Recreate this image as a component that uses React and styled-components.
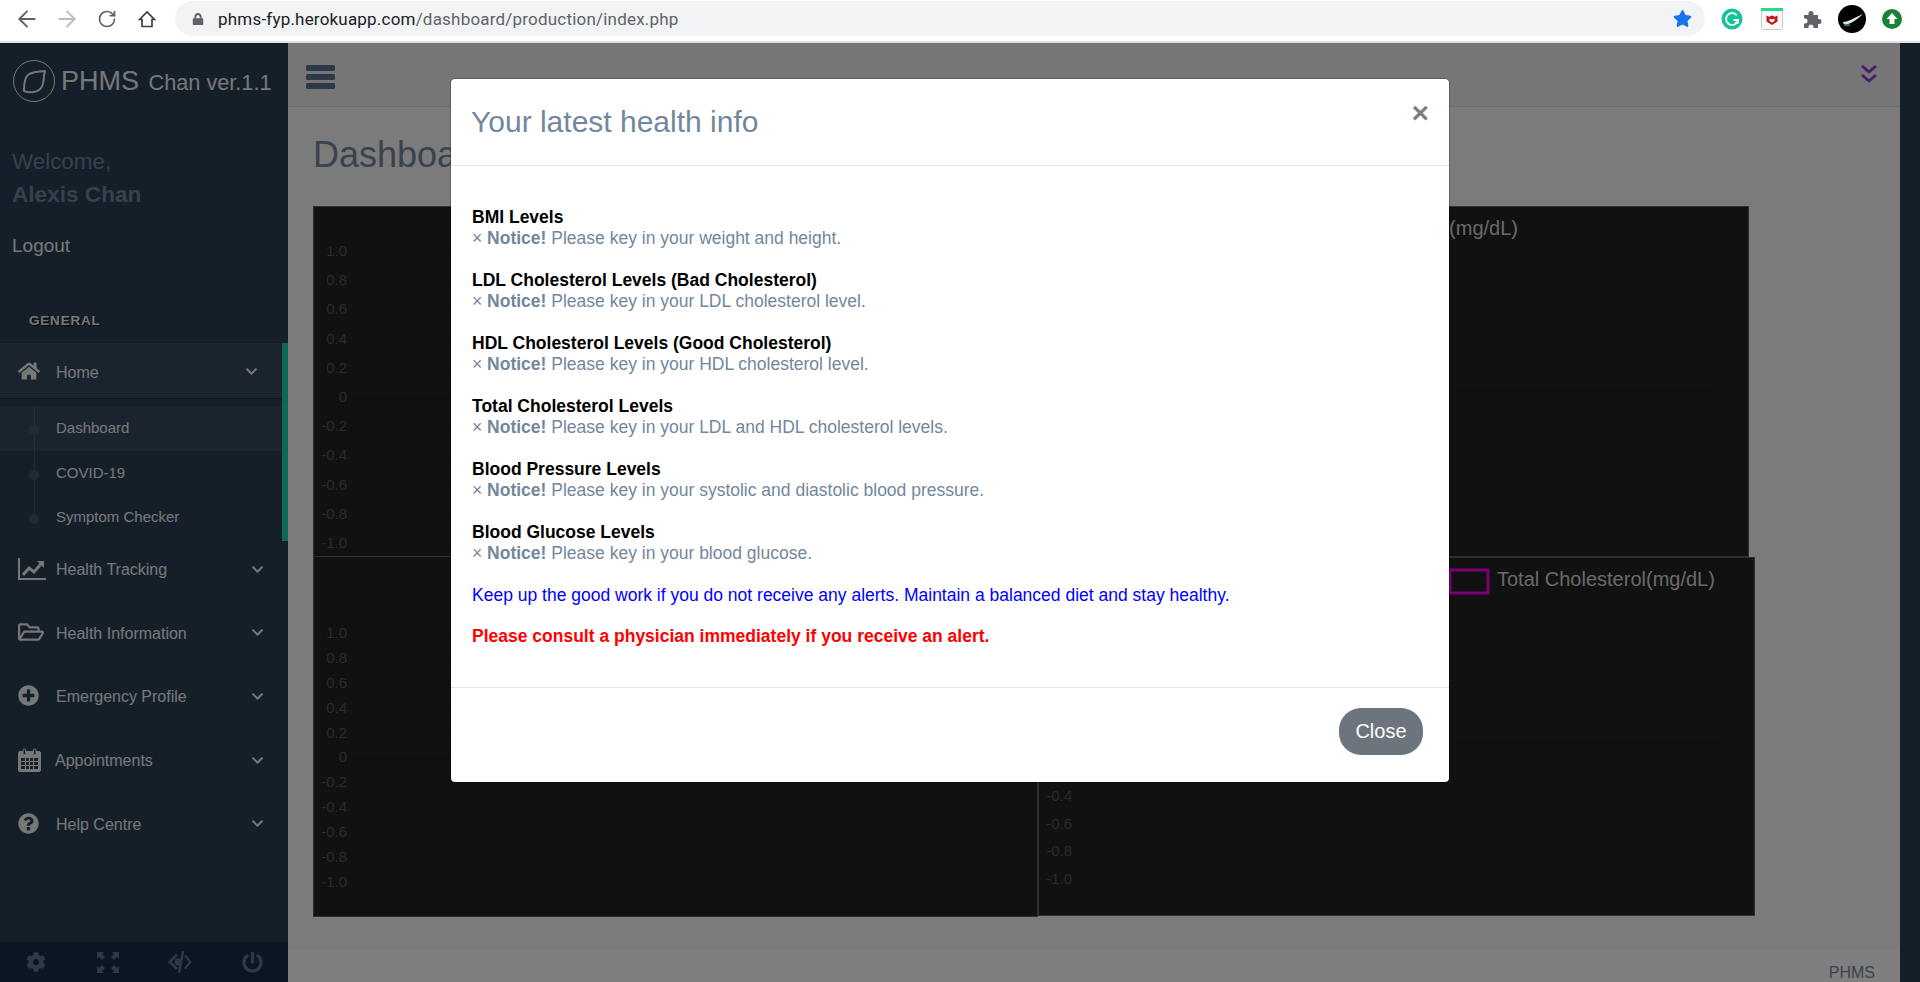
import React from 'react';
import styled, { createGlobalStyle } from 'styled-components';
import { ArrowLeft, ArrowRight, RotateCw } from 'lucide-react';
import {
  FaHome,
  FaRegFolderOpen,
  FaPlusCircle,
  FaQuestionCircle,
  FaChevronDown,
  FaCog,
  FaPowerOff,
  FaStar,
  FaLock,
} from 'react-icons/fa';

const GlobalStyle = createGlobalStyle`
  html, body {
    margin: 0;
    padding: 0;
    background: #2a3f54;
    font-family: "Liberation Sans", Arial, sans-serif;
  }
  * { box-sizing: border-box; }
`;

const Window = styled.div`
  width: 1920px;
  height: 982px;
  overflow: hidden;
  display: flex;
  flex-direction: column;
`;

/* browser chrome */
const Toolbar = styled.div`
  height: 43px;
  flex: none;
  display: flex;
  align-items: flex-start;
  padding-left: 7px;
  background: #fff;
  border-bottom: 2px solid #dee1e6;
`;

const ToolButton = styled.div`
  width: 40px;
  height: 38px;
  flex: none;
  display: flex;
  align-items: center;
  justify-content: center;
  color: ${p => (p.$disabled ? '#babcbe' : '#5f6368')};
`;

const UrlBar = styled.div`
  width: 1530px;
  height: 35px;
  margin: 1px 7px 0 8px;
  padding: 0 13px 0 17px;
  flex: none;
  display: flex;
  align-items: center;
  border-radius: 18px;
  background: #f1f3f4;
`;

const UrlText = styled.div`
  margin-left: 14px;
  flex: 1;
  font-family: Roboto, "Noto Sans", sans-serif;
  font-size: 17px;
  letter-spacing: 0.2px;
  color: #5f6368;
  white-space: nowrap;

  b {
    font-weight: 400;
    color: #202124;
  }
`;

/* page */
const Page = styled.div`
  position: relative;
  flex: 1;
  display: flex;
  min-height: 0;
  background: #2a3f54;
`;

const Sidebar = styled.aside`
  width: 288px;
  flex: none;
  display: flex;
  flex-direction: column;
  background: #2a3f54;
  color: #ecf0f1;
`;

const Brand = styled.div`
  height: 76px;
  padding-left: 13px;
  display: flex;
  align-items: center;
  gap: 6px;
  flex: none;
`;

const LogoCircle = styled.div`
  width: 42px;
  height: 42px;
  flex: none;
  border: 1px solid #ecf0f1;
  border-radius: 50%;
  display: flex;
  align-items: center;
  justify-content: center;
`;

const BrandName = styled.div`
  font-size: 27px;
  white-space: nowrap;

  small {
    font-size: 21.7px;
    margin-left: 2px;
  }
`;

const Profile = styled.div`
  margin-top: 26px;
  padding-left: 12px;
  font-size: 22.4px;
  line-height: 33px;
  color: #6d8297;

  strong {
    display: block;
    font-size: 22.6px;
  }
`;

const Logout = styled.div`
  margin-top: 20px;
  padding-left: 12px;
  font-size: 19px;
  line-height: 30px;
`;

const SectionLabel = styled.h3`
  margin: 50px 0 12px;
  padding-left: 29px;
  font-size: 13.5px;
  line-height: 20px;
  font-weight: 700;
  letter-spacing: 0.8px;
  text-shadow: 1px 1px #000;
`;

const ActiveSection = styled.div`
  height: 198px;
  flex: none;
  border-right: 6px solid #1cd0ad;
`;

const MenuRow = styled.div`
  height: ${p => (p.$open ? '56px' : '58px')};
  margin-bottom: ${p => (p.$open ? '0' : '5.7px')};
  padding: ${p => (p.$open ? '3px 24px 0 18px' : '0 24px 0 18px')};
  flex: none;
  display: flex;
  align-items: center;
  font-size: 16px;
  background: ${p => (p.$open ? 'rgba(255,255,255,.05)' : 'transparent')};
  border-top: ${p => (p.$open ? '1px solid #3e5063' : 'none')};
  border-bottom: ${p => (p.$open ? '1px solid #1c2b3a' : 'none')};
`;

const MenuIcon = styled.span`
  width: ${p => p.$cell || 38}px;
  flex: none;
  display: flex;
  margin-top: -3px;
`;

const MenuChevron = styled(FaChevronDown)`
  margin-left: auto;
  margin-top: -2px;
  width: 13px;
  height: 13px;
`;

const SubList = styled.div`
  position: relative;
  padding-top: 7px;

  &::before {
    content: '';
    position: absolute;
    left: 33.5px;
    top: 7px;
    height: 111px;
    width: 1px;
    background: #425668;
  }
`;

const SubItem = styled.div`
  position: relative;
  height: 44.6px;
  padding: 0 0 1px 56px;
  display: flex;
  align-items: center;
  font-size: 15px;
  background: ${p => (p.$active ? 'rgba(255,255,255,.05)' : 'transparent')};

  &::before {
    content: '';
    position: absolute;
    left: 29px;
    top: 19px;
    width: 10px;
    height: 10px;
    border-radius: 50%;
    background: #425668;
  }
`;

const ToolStrip = styled.div`
  margin-top: auto;
  height: 40px;
  flex: none;
  display: grid;
  grid-template-columns: repeat(4, 1fr);
  align-items: center;
  justify-items: center;
  background: #172d44;
  color: #5a738e;
`;

/* main column */
const Main = styled.main`
  width: 1612px;
  flex: none;
  display: flex;
  flex-direction: column;
  background: #f7f7f7;
`;

const Nav = styled.nav`
  height: 64px;
  flex: none;
  padding: 0 23px 0 18px;
  display: flex;
  align-items: flex-start;
  justify-content: space-between;
  background: #ededed;
  border-bottom: 1px solid #d9dee4;

  svg { margin-top: 22px; }
`;

const Content = styled.section`
  flex: 1;
  padding-left: 25px;
`;

const PageTitle = styled.h1`
  margin: 0 0 3px;
  height: 96px;
  line-height: 96px;
  font-size: 36px;
  font-weight: 400;
  color: #73879c;
`;

const ChartRow = styled.div`
  display: flex;
  height: ${p => p.$height}px;
  align-items: flex-start;
`;

const ChartBox = styled.div`
  width: ${p => p.$w}px;
  height: ${p => p.$h}px;
  margin-top: ${p => p.$offset || 0}px;
  flex: none;
  background: #222;
  border: 1px solid #5e5e5e;
`;

const AxisLabel = styled.text`
  font-size: 15px;
  fill: #565656;
  text-anchor: end;
  dominant-baseline: middle;
`;

const GridLine = styled.line`
  stroke: ${p => (p.$zero ? 'rgba(0,0,0,.16)' : 'rgba(0,0,0,.06)')};
  stroke-width: 1;
`;

const LegendText = styled.text`
  font-size: 20px;
  fill: #d4d4d4;
  dominant-baseline: middle;
`;

const LegendSwatch = styled.rect`
  fill: none;
  stroke: #f400f4;
  stroke-width: 3;
`;

const Footer = styled.footer`
  height: 33px;
  flex: none;
  padding: 15px 25px 0 0;
  text-align: right;
  font-size: 16px;
  line-height: 18px;
  color: #73879c;
  background: #fff;
`;

const RightGutter = styled.div`
  flex: 1;
`;

/* modal */
const Backdrop = styled.div`
  position: absolute;
  inset: 0;
  padding: 35px 0 0 450px;
  background: rgba(0, 0, 0, 0.5);
`;

const Modal = styled.div`
  width: 1000px;
  height: 705px;
  display: flex;
  flex-direction: column;
  background: #fff;
  border: 1px solid rgba(0, 0, 0, 0.2);
  border-radius: 5px;
  background-clip: padding-box;
  color: #73879c;
`;

const ModalHeader = styled.div`
  height: 87px;
  flex: none;
  padding: 25px 20px 0 20px;
  display: flex;
  justify-content: space-between;
  align-items: flex-start;
  border-bottom: 1px solid #e5e5e5;
`;

const ModalTitle = styled.h5`
  margin: 0;
  font-size: 30px;
  line-height: 36px;
  font-weight: 400;
`;

const CloseX = styled.span`
  margin-top: -6px;
  font-size: 30px;
  line-height: 30px;
  font-weight: 700;
  color: #000;
  opacity: 0.5;
`;

const ModalBody = styled.div`
  flex: 1;
  padding: 41px 21px 0;
  font-size: 17.5px;
  line-height: 21px;
`;

const Level = styled.div`
  margin-bottom: 21px;
`;

const LevelName = styled.div`
  font-weight: 700;
  color: #000;
`;

const Message = styled.p`
  margin: 0 0 ${p => (p.$last ? 0 : 20)}px;
  color: ${p => p.$color};
  font-weight: ${p => (p.$bold ? 700 : 400)};
`;

const ModalFooter = styled.div`
  height: 95px;
  flex: none;
  padding: 20px 26px 0 0;
  display: flex;
  justify-content: flex-end;
  align-items: flex-start;
  border-top: 1px solid #e5e5e5;
`;

const CloseButton = styled.button`
  width: 84px;
  height: 47px;
  padding: 0;
  border: 0;
  border-radius: 22px;
  background: #6c757d;
  color: #fff;
  font: 400 20px "Liberation Sans", Arial, sans-serif;
`;

const TICKS = ['1.0', '0.8', '0.6', '0.4', '0.2', '0', '-0.2', '-0.4', '-0.6', '-0.8', '-1.0'];

const Chart = ({ w, h, top, step, labelX = 33, gridRight, offset, children }) => (
  <ChartBox $w={w} $h={h} $offset={offset}>
    <svg width={w - 2} height={h - 2}>
      {TICKS.map((t, i) => {
        const y = top + i * step;
        return (
          <g key={t}>
            <AxisLabel x={labelX} y={y}>{t}</AxisLabel>
            <GridLine $zero={t === '0'} x1={labelX + 3} x2={gridRight} y1={y + 0.5} y2={y + 0.5} />
          </g>
        );
      })}
      <GridLine x1={labelX + 14} x2={labelX + 14} y1={top} y2={top + step * 10} />
      {children}
    </svg>
  </ChartBox>
);

const LEVELS = [
  ['BMI Levels', 'Please key in your weight and height.'],
  ['LDL Cholesterol Levels (Bad Cholesterol)', 'Please key in your LDL cholesterol level.'],
  ['HDL Cholesterol Levels (Good Cholesterol)', 'Please key in your HDL cholesterol level.'],
  ['Total Cholesterol Levels', 'Please key in your LDL and HDL cholesterol levels.'],
  ['Blood Pressure Levels', 'Please key in your systolic and diastolic blood pressure.'],
  ['Blood Glucose Levels', 'Please key in your blood glucose.'],
];

const LineChartIcon = () => (
  <svg width="28" height="22" viewBox="0 0 28 22" fill="none" stroke="currentColor">
    <path d="M1 0v21h27" strokeWidth="2" />
    <path d="M5 17l6-7 5 4 7-8" strokeWidth="3" />
    <path d="M19 3h7v7z" fill="currentColor" stroke="none" />
  </svg>
);

const CalendarIcon = () => (
  <svg width="23" height="24" viewBox="0 0 23 24" fill="none" stroke="currentColor">
    <rect x="0.5" y="3.5" width="22" height="20" rx="1.5" fill="currentColor" />
    <path d="M3 10h17v11H3z" fill="#2a3f54" stroke="none" />
    <path d="M3 13.5h17M3 17.5h17M7.5 10v11M11.5 10v11M15.5 10v11" strokeWidth="1.2" />
    <rect x="5" y="0.8" width="2.6" height="6" rx="1.3" fill="#2a3f54" />
    <rect x="15.4" y="0.8" width="2.6" height="6" rx="1.3" fill="#2a3f54" />
  </svg>
);

const ExpandIcon = () => (
  <svg width="22" height="21" viewBox="0 0 22 21" fill="currentColor">
    <path d="M0 0h7L5 2l3 3-3 3-3-3-2 2zM22 0h-7l2 2-3 3 3 3 3-3 2 2zM0 21h7l-2-2 3-3-3-3-3 3-2-2zM22 21h-7l2-2-3-3 3-3 3 3 2-2z" />
  </svg>
);

const EyeCloseIcon = () => (
  <svg width="24" height="22" viewBox="0 0 24 22" fill="none" stroke="currentColor">
    <path d="M9 3.5L1.8 11 9 18" strokeWidth="2.6" />
    <path d="M17 4.5L22.3 11 17 17.5" strokeWidth="2.2" />
    <path d="M15 0L11 22" strokeWidth="2.4" />
    <circle cx="10" cy="11" r="3.4" fill="currentColor" stroke="none" />
  </svg>
);

const App = () => (
  <Window>
    <GlobalStyle />
    <Toolbar>
      <ToolButton><ArrowLeft size={26} strokeWidth={1.8} /></ToolButton>
      <ToolButton $disabled><ArrowRight size={26} strokeWidth={1.8} /></ToolButton>
      <ToolButton><RotateCw size={20} strokeWidth={2} /></ToolButton>
      <ToolButton>
        <svg width="18" height="18" viewBox="0 0 18 18" fill="none" stroke="#3c4043" strokeWidth="1.7">
          <path d="M1.5 9.5L9 2l7.5 7.5H14V16.5H4V9.5z" />
        </svg>
      </ToolButton>
      <UrlBar>
        <FaLock size={12} color="#5f6368" />
        <UrlText><b>phms-fyp.herokuapp.com</b>/dashboard/production/index.php</UrlText>
        <FaStar size={19} color="#1a73e8" />
      </UrlBar>
      <ToolButton>
        <svg width="22" height="22" viewBox="0 0 22 22">
          <circle cx="11" cy="11" r="10.5" fill="#15c39a" />
          <path d="M15.8 7.3A6 6 0 1 0 17 12h-4.5" fill="none" stroke="#fff" strokeWidth="1.8" />
          <path d="M14 15l3 0 0-3" fill="none" stroke="#fff" strokeWidth="1.4" />
        </svg>
      </ToolButton>
      <ToolButton>
        <svg width="22" height="22" viewBox="0 0 22 22">
          <rect x="0.5" y="0.5" width="21" height="21" rx="2" fill="#fafafa" stroke="#c8c8c8" />
          <rect x="0" y="0" width="22" height="3" fill="#1fdc85" />
          <path d="M5.5 7.5l2.5 1.2 3-1.2 3 1.2 2.5-1.2v6l-5.5 3.5-5.5-3.5z" fill="#c01818" />
          <path d="M8.5 10.5l2.5 1 2.5-1v2.5l-2.5 1.5-2.5-1.5z" fill="#fff" />
        </svg>
      </ToolButton>
      <ToolButton>
        <svg width="20" height="20" viewBox="0 0 20 20" fill="#5f6368">
          <path d="M2 6h4.5V4.5a2.5 2.5 0 0 1 5 0V6H16v4h1a2.5 2.5 0 0 1 0 5h-1v4h-4.5v-1a2.5 2.5 0 0 0-5 0v1H2v-4.5h1a2.5 2.5 0 0 0 0-5H2z" />
        </svg>
      </ToolButton>
      <ToolButton>
        <svg width="28" height="28" viewBox="0 0 28 28">
          <circle cx="14" cy="14" r="14" fill="#000" />
          <path d="M5 17C10 17 18 12 25 9C20 14 14 18 10 19C7 20 5 19 5 17Z" fill="#dfe6ea" />
          <path d="M6 19.5h6v1.2H6z" fill="#5ba3c4" />
        </svg>
      </ToolButton>
      <ToolButton>
        <svg width="20" height="20" viewBox="0 0 20 20">
          <circle cx="10" cy="10" r="10" fill="#188038" />
          <path d="M10 4l5.5 6H12.5v5h-5v-5H4.500z" fill="#fff" />
        </svg>
      </ToolButton>
    </Toolbar>

    <Page>
      <Sidebar>
        <Brand>
          <LogoCircle>
            <svg width="26" height="26" viewBox="0 0 26 26" fill="none" stroke="#ecf0f1" strokeWidth="2" strokeLinejoin="round">
              <path d="M24 3C18 4 10 3 6 8C3 12 3 19 3 23C8 25 16 25 20 20C24 15 22 8 24 3Z" />
            </svg>
          </LogoCircle>
          <BrandName>PHMS <small>Chan ver.1.1</small></BrandName>
        </Brand>
        <Profile>Welcome,<strong>Alexis Chan</strong></Profile>
        <Logout>Logout</Logout>
        <SectionLabel>GENERAL</SectionLabel>

        <ActiveSection>
          <MenuRow $open>
            <MenuIcon><FaHome size={22} /></MenuIcon>
            Home
            <MenuChevron />
          </MenuRow>
          <SubList>
            <SubItem $active>Dashboard</SubItem>
            <SubItem>COVID-19</SubItem>
            <SubItem>Symptom Checker</SubItem>
          </SubList>
        </ActiveSection>

        <MenuRow>
          <MenuIcon><LineChartIcon /></MenuIcon>
          Health Tracking
          <MenuChevron />
        </MenuRow>
        <MenuRow>
          <MenuIcon><FaRegFolderOpen size={26} /></MenuIcon>
          Health Information
          <MenuChevron />
        </MenuRow>
        <MenuRow>
          <MenuIcon><FaPlusCircle size={21} /></MenuIcon>
          Emergency Profile
          <MenuChevron />
        </MenuRow>
        <MenuRow>
          <MenuIcon $cell={37}><CalendarIcon /></MenuIcon>
          Appointments
          <MenuChevron />
        </MenuRow>
        <MenuRow>
          <MenuIcon><FaQuestionCircle size={21} /></MenuIcon>
          Help Centre
          <MenuChevron />
        </MenuRow>

        <ToolStrip>
          <FaCog size={20} />
          <ExpandIcon />
          <EyeCloseIcon />
          <FaPowerOff size={21} />
        </ToolStrip>
      </Sidebar>

      <Main>
        <Nav>
          <svg width="29" height="24" viewBox="0 0 29 24" fill="#5a738e">
            <rect width="29" height="6" rx="1.5" />
            <rect y="9" width="29" height="6" rx="1.5" />
            <rect y="18" width="29" height="6" rx="1.5" />
          </svg>
          <svg width="16" height="18" viewBox="0 0 16 18" fill="none" stroke="#9c30dc" strokeWidth="2.8">
            <path d="M1 1l7 6 7-6M1 10l7 6 7-6" />
          </svg>
        </Nav>
        <Content>
          <PageTitle>Dashboard</PageTitle>
          <ChartRow $height={350}>
            <Chart w={725} h={351} top={45} step={29.2} gridRight={712} />
            <Chart w={711} h={351} top={38} step={29} gridRight={675}>
              <LegendText x="479" y="23" textAnchor="end">HDL Cholesterol(mg/dL)</LegendText>
            </Chart>
          </ChartRow>
          <ChartRow $height={361}>
            <Chart w={725} h={361} top={77} step={24.9} gridRight={712} />
            <Chart w={717} h={359} offset={1} top={45} step={27.7} gridRight={680}>
              <LegendSwatch x="411" y="12" width="38" height="23" />
              <LegendText x="458" y="23">Total Cholesterol(mg/dL)</LegendText>
            </Chart>
          </ChartRow>
        </Content>
        <Footer>PHMS</Footer>
      </Main>
      <RightGutter />

      <Backdrop>
        <Modal>
          <ModalHeader>
            <ModalTitle>Your latest health info</ModalTitle>
            <CloseX>×</CloseX>
          </ModalHeader>
          <ModalBody>
            {LEVELS.map(([name, text]) => (
              <Level key={name}>
                <LevelName>{name}</LevelName>
                × <strong>Notice!</strong> {text}
              </Level>
            ))}
            <Message $color="#0000ff">
              Keep up the good work if you do not receive any alerts. Maintain a balanced diet and stay healthy.
            </Message>
            <Message $color="#ff0000" $bold $last>
              Please consult a physician immediately if you receive an alert.
            </Message>
          </ModalBody>
          <ModalFooter>
            <CloseButton>Close</CloseButton>
          </ModalFooter>
        </Modal>
      </Backdrop>
    </Page>
  </Window>
);

export default App;
